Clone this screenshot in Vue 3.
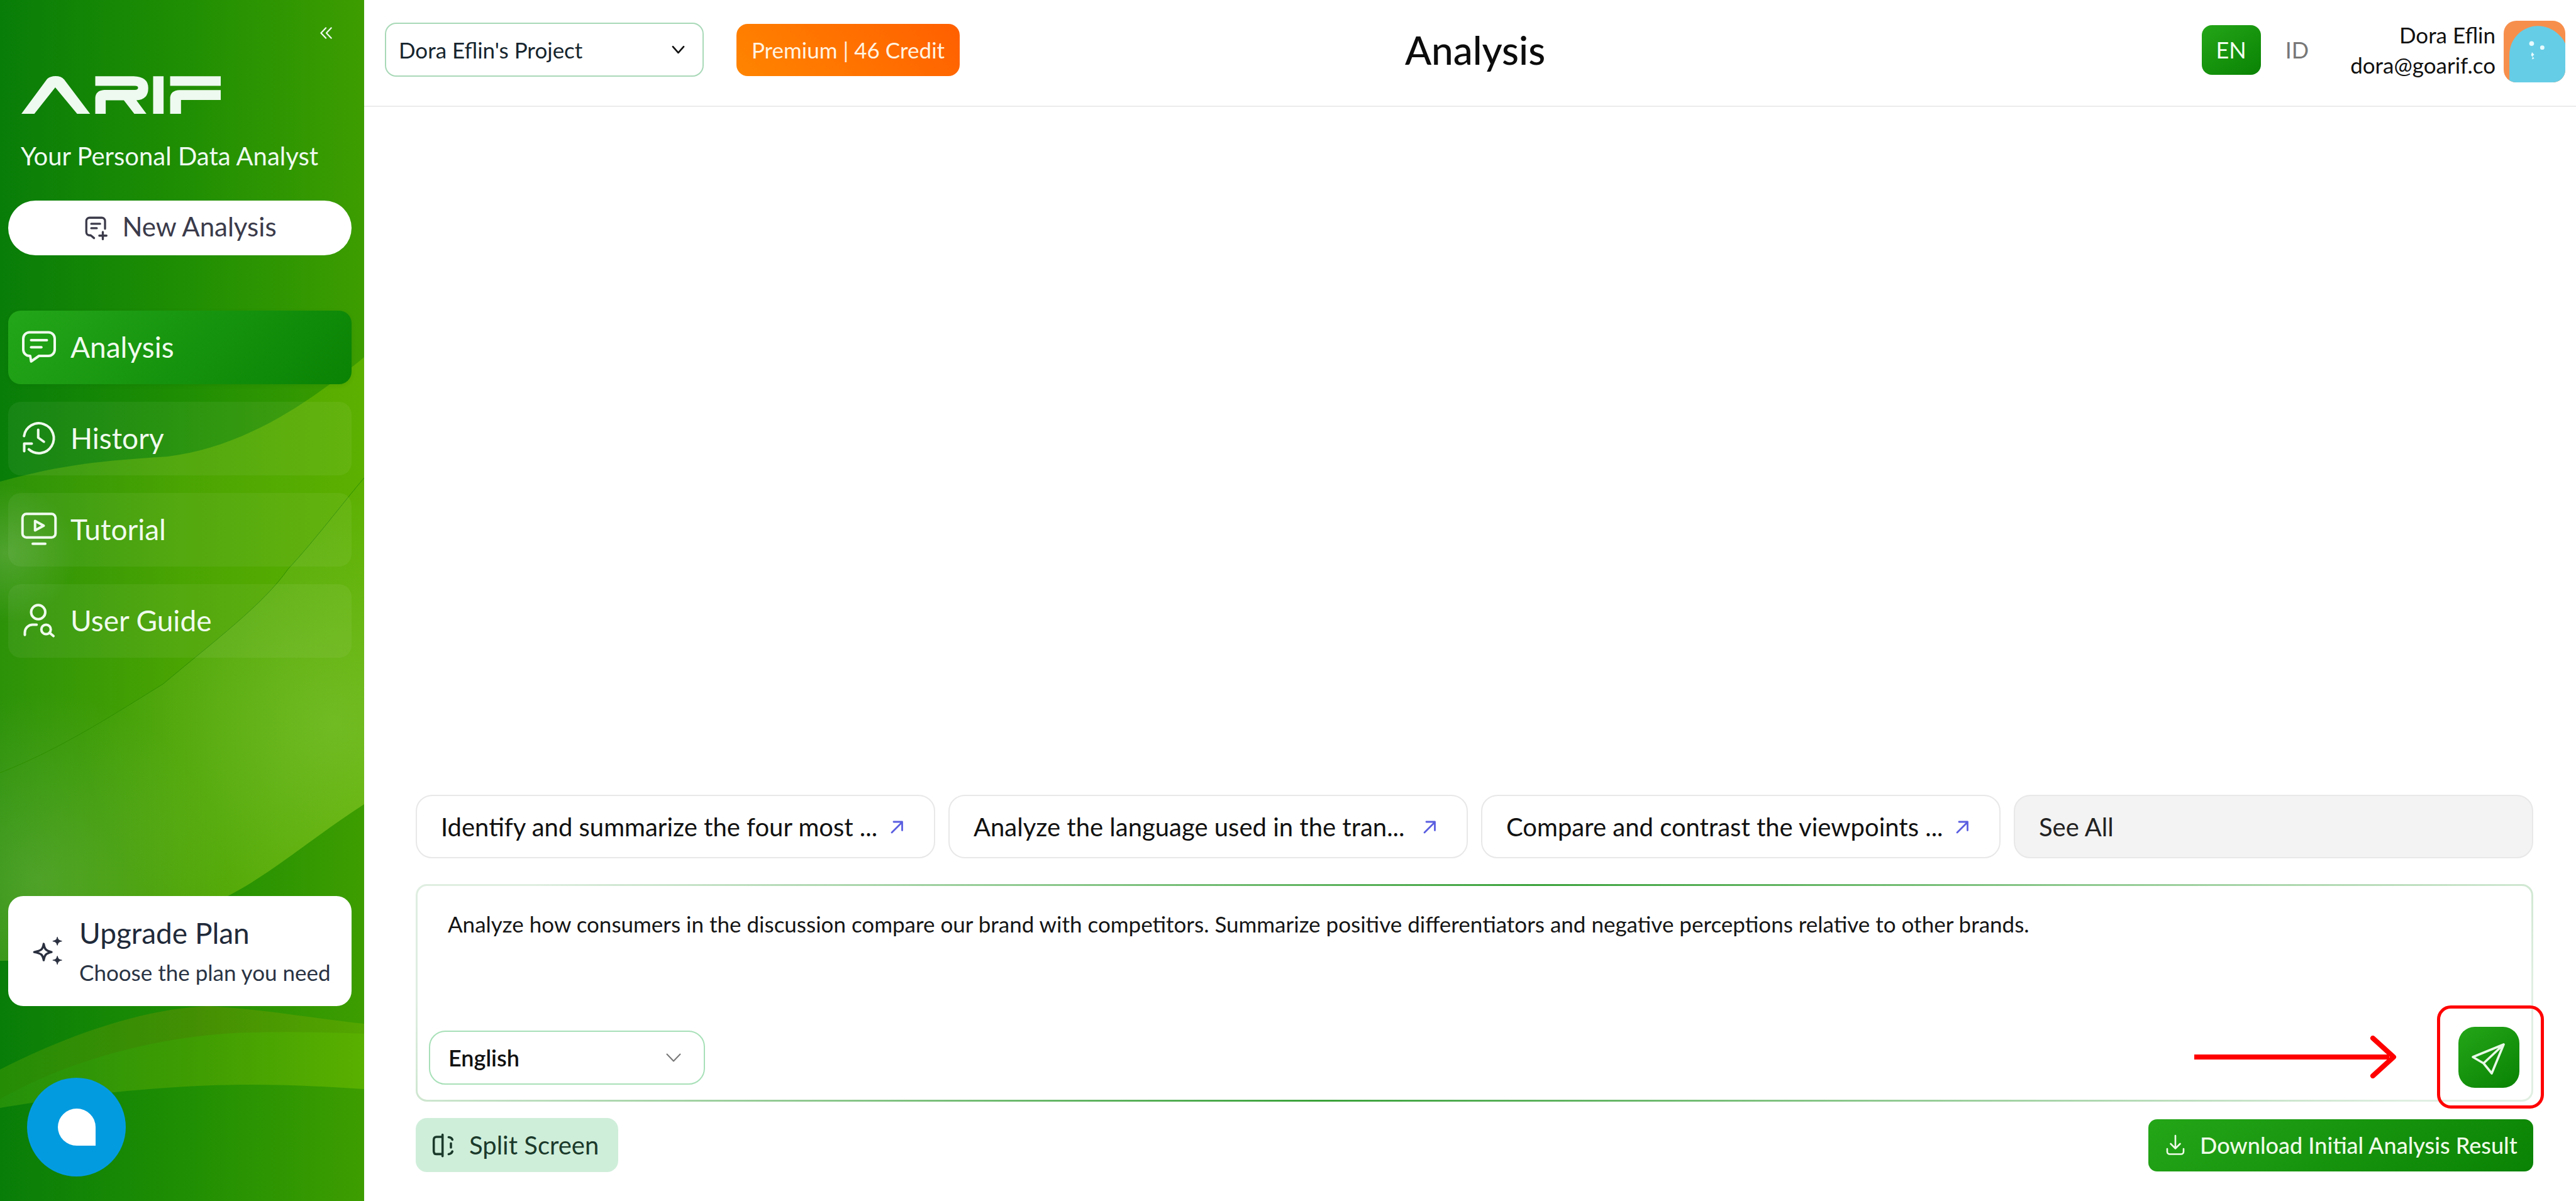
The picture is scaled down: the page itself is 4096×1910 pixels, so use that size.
<script setup>
const nav = [
  { label: 'Analysis', active: true, paths: ['M6 3h12a4 4 0 0 1 4 4v7a4 4 0 0 1-4 4h-6l-5 3.5-.6-3.5H6a4 4 0 0 1-4-4V7a4 4 0 0 1 4-4z', 'M7 8h10', 'M7 12.5h6.5'] },
  { label: 'History', paths: ['M2.5 11a9.5 9.5 0 1 1 3 8.4', 'M2.6 20.6v-4.8h4.8', 'M11.5 7v5l3.6 2.6'] },
  { label: 'Tutorial', paths: ['M4 2.5h16a2.5 2.5 0 0 1 2.5 2.5v10a2.5 2.5 0 0 1-2.5 2.5H4A2.5 2.5 0 0 1 1.5 15V5A2.5 2.5 0 0 1 4 2.5z', 'M9.5 7l5.5 3-5.5 3z', 'M8 21.5h8'] },
  { label: 'User Guide', paths: ['M7 7a4.5 4.5 0 1 0 9 0a4.5 4.5 0 1 0-9 0', 'M3 21.5V20a5 5 0 0 1 5-5h2.5', 'M13.5 18a3 3 0 1 0 6 0a3 3 0 1 0-6 0', 'M18.8 20.2l2.4 2'] }
]
const chips = [
  'Identify and summarize the four most ...',
  'Analyze the language used in the tran...',
  'Compare and contrast the viewpoints ...'
]
const prompt = 'Analyze how consumers in the discussion compare our brand with competitors. Summarize positive differentiators and negative perceptions relative to other brands.'
</script>

<template>
  <div class="app">
    <aside class="side">
      <svg class="waves" viewBox="0 0 579 1910" aria-hidden="true">
        <defs>
          <linearGradient id="base" gradientUnits="userSpaceOnUse" x1="0" y1="0" x2="579" y2="0">
            <stop offset="0" stop-color="#087d08" />
            <stop offset="0.5" stop-color="#1f8e03" />
            <stop offset="1" stop-color="#3d9d00" />
          </linearGradient>
          <linearGradient id="band" gradientUnits="userSpaceOnUse" x1="0" y1="0" x2="579" y2="0">
            <stop offset="0" stop-color="#2c9208" />
            <stop offset="0.5" stop-color="#4aa402" />
            <stop offset="1" stop-color="#5cb000" />
          </linearGradient>
          <linearGradient id="low" gradientUnits="userSpaceOnUse" x1="0" y1="0" x2="579" y2="0">
            <stop offset="0" stop-color="#258c06" />
            <stop offset="0.55" stop-color="#448f03" />
            <stop offset="1" stop-color="#54a600" />
          </linearGradient>
          <linearGradient id="low2" gradientUnits="userSpaceOnUse" x1="0" y1="0" x2="579" y2="0">
            <stop offset="0" stop-color="#24900a" />
            <stop offset="0.55" stop-color="#409d02" />
            <stop offset="1" stop-color="#5ab000" />
          </linearGradient>
          <radialGradient id="glow" gradientUnits="userSpaceOnUse" cx="530" cy="1150" r="400">
            <stop offset="0" stop-color="#9ad060" stop-opacity="0.36" />
            <stop offset="1" stop-color="#9ad060" stop-opacity="0" />
          </radialGradient>
          <radialGradient id="glow2" gradientUnits="userSpaceOnUse" cx="10" cy="880" r="110">
            <stop offset="0" stop-color="#d8e4c8" stop-opacity="0.2" />
            <stop offset="1" stop-color="#d8e4c8" stop-opacity="0" />
          </radialGradient>
          <radialGradient id="glow3" gradientUnits="userSpaceOnUse" cx="60" cy="1400" r="300">
            <stop offset="0" stop-color="#a8c890" stop-opacity="0.24" />
            <stop offset="1" stop-color="#a8c890" stop-opacity="0" />
          </radialGradient>
        </defs>
        <rect width="579" height="1910" fill="url(#base)" />
        <path d="M0 766C100 738 170 732 267 726C400 710 510 625 579 568V1279C500 1330 430 1390 366 1423C250 1480 100 1528 0 1528Z" fill="url(#band)" />
        <path d="M0 766C100 738 170 732 267 726C400 710 510 625 579 568V1279C500 1330 430 1390 366 1423C250 1480 100 1528 0 1528Z" fill="url(#glow3)" />
        <path d="M0 766C100 738 170 732 267 726C400 710 510 625 579 568V1279C500 1330 430 1390 366 1423C250 1480 100 1528 0 1528Z" fill="url(#glow2)" />
        <path d="M0 1229C100 1190 190 1130 259 1088C340 1020 420 960 458 905C500 860 545 800 579 760V1279C500 1330 430 1390 366 1423C320 1450 260 1475 200 1495Z" fill="url(#glow)" />
        <path d="M0 1229C100 1190 190 1130 259 1088C340 1020 420 960 458 905C500 860 545 800 579 760" fill="none" stroke="#2f8f00" stroke-width="1" />
        <path d="M0 1701C100 1650 220 1605 330 1600C420 1605 500 1620 579 1628V1910H0Z" fill="url(#low)" />
        <path d="M0 1748C100 1690 250 1645 400 1642C460 1640 520 1642 579 1644V1910H0Z" fill="url(#low2)" />
        <path d="M0 1762C100 1745 250 1725 400 1725C460 1725 520 1728 579 1732V1910H0Z" fill="url(#base)" />
      </svg>

      <button class="collapse" aria-label="Collapse">
        <svg viewBox="0 0 24 20" class="collapse-icon">
          <path d="M11 1.5L3 10l8 8.5M20 1.5L12 10l8 8.5" />
        </svg>
      </button>

      <svg class="logo" viewBox="55 70 1430 328" preserveAspectRatio="none" role="img" aria-label="ARIF logo">
        <path d="M55 398L240 95Q262 70 300 70Q340 70 362 100L548 398H455L298 168L148 398Z" />
        <path d="M585 72H860Q965 75 965 175Q965 275 880 280L952 398H865L790 280H660V398H585V265Q585 195 650 190H870Q892 188 892 172Q892 155 870 155H585Z" />
        <path d="M1000 72H1075V398H1000Z" />
        <path d="M1122 72H1485V155H1122Z" />
        <path d="M1122 398V265Q1122 195 1190 192H1485V278H1200V398Z" />
      </svg>

      <p class="tagline">Your Personal Data Analyst</p>

      <button class="new">
        <svg viewBox="0 0 24 24" class="new-icon">
          <path d="M20 13V6a3 3 0 0 0-3-3H6a3 3 0 0 0-3 3v10a3 3 0 0 0 3 3h1l3 2.5" />
          <path d="M7.5 8.5h8M7.5 12.5h5M18 16v6.5M14.8 19.3h6.5" />
        </svg>
        <span>New Analysis</span>
      </button>

      <nav class="nav">
        <a v-for="item in nav" :key="item.label" class="nav-item" :class="{ active: item.active }">
          <svg viewBox="0 0 24 24" class="nav-icon">
            <path v-for="d in item.paths" :key="d" :d="d" />
          </svg>
          <span>{{ item.label }}</span>
        </a>
      </nav>

      <div class="upgrade">
        <svg viewBox="0 0 48 46" class="spark">
          <path class="spark-line" d="M18 12C19.500 20 21 22 29.500 24C21 26 19.500 28 18 36C16.500 28 15 26 4 24C15 22 16.500 20 18 12Z" />
          <path class="spark-fill" d="M38 2C38.800 6 40 7 44.500 8C40 9 38.800 10 38 14C37.200 10 36 9 31.500 8C36 7 37.200 6 38 2Z" />
          <path class="spark-fill" d="M38 30C38.800 34 40 35 44.500 36C40 37 38.800 38 38 42C37.200 38 36 37 31.500 36C36 35 37.200 34 38 30Z" />
        </svg>
        <div class="upgrade-text">
          <strong>Upgrade Plan</strong>
          <small>Choose the plan you need</small>
        </div>
      </div>
    </aside>

    <main class="main">
      <header class="top">
        <div class="top-left">
          <div class="project">
            <span>Dora Eflin's Project</span>
            <svg viewBox="0 0 22 14" class="project-chev"><path d="M2 2l9 10 9-10" /></svg>
          </div>
          <div class="credit">Premium | 46 Credit</div>
        </div>
        <h1 class="title">Analysis</h1>
        <div class="top-right">
          <span class="lang on">EN</span>
          <span class="lang">ID</span>
          <div class="who">
            <span>Dora Eflin</span>
            <span>dora@goarif.co</span>
          </div>
          <svg class="avatar" viewBox="0 0 540 540" role="img" aria-label="Avatar">
            <rect width="540" height="540" fill="#f78f4c" />
            <path d="M50 540V300C50 150 170 45 300 45C400 45 500 110 540 200V540Z" fill="#66cde6" />
            <circle cx="245" cy="200" r="21" fill="#e8fbff" />
            <circle cx="338" cy="235" r="19" fill="#e8fbff" />
            <path d="M248 275l20 22-16 14 16 20-22 8 8-20-14-18z" fill="#e8fbff" />
          </svg>
        </div>
      </header>

      <section class="body">
        <div class="chips">
          <button v-for="c in chips" :key="c" class="chip">
            <span>{{ c }}</span>
            <svg viewBox="0 0 22 22" class="chip-arrow"><path d="M3 20L19 4M6 3h13.500v13.500" /></svg>
          </button>
          <button class="chip all">See All</button>
        </div>

        <div class="box">
          <p class="prompt">{{ prompt }}</p>
          <div class="box-row">
            <div class="lang-select">
              <span>English</span>
              <svg viewBox="0 0 24 14" class="lang-chev"><path d="M1.500 1.500L12 12.500 22.500 1.500" /></svg>
            </div>
            <button class="send" aria-label="Send">
              <svg viewBox="0 0 97 97"><path d="M72 28L23 48L40 58L53 74ZM72 28L40 58" /></svg>
            </button>
          </div>
        </div>

        <div class="foot">
          <button class="split">
            <svg viewBox="225 215 195 215" class="split-icon">
              <path d="M318 247H265Q240 247 240 275V372Q240 400 265 400H318M318 228V418M372 250Q398 252 405 272M392 305V342M405 376Q398 396 372 400" />
            </svg>
            <span>Split Screen</span>
          </button>
          <button class="download">
            <svg viewBox="0 0 30 34" class="dl-icon">
              <path d="M15 2V22M7.500 15L15 22.500 22.500 15M2 23V27.500A4 4 0 0 0 6 31.500H24A4 4 0 0 0 28 27.500V23" />
            </svg>
            <span>Download Initial Analysis Result</span>
          </button>
        </div>
      </section>
    </main>

    <div class="bubble"><i></i></div>

    <div class="mark-box"></div>
    <svg class="mark-arrow" viewBox="0 0 330 68">
      <path class="shaft" d="M0 34H310" />
      <path class="head" d="M284 4L317 34 284 64" />
    </svg>
  </div>
</template>

<style scoped>
.app {
  position: relative;
  display: flex;
  width: 4096px;
  height: 1910px;
  overflow: hidden;
  background: #fff;
  color: #111;
  font-family: Lato, "Noto Sans", sans-serif;
}
button {
  font-family: inherit;
  border: 0;
  padding: 0;
  cursor: pointer;
}
svg:where(:not(.waves, .avatar)) path {
  fill: none;
  stroke: currentColor;
  stroke-linecap: round;
  stroke-linejoin: round;
}

/* Sidebar */
.side {
  position: relative;
  flex: 0 0 579px;
  display: flex;
  flex-direction: column;
  box-sizing: border-box;
  height: 1910px;
  padding: 43px 20px 310px 13px;
  background: #1f8e03;
}
.waves {
  position: absolute;
  inset: 0;
  width: 579px;
  height: 1910px;
}
.side > *:not(.waves) {
  position: relative;
}
.collapse {
  align-self: flex-end;
  width: 24px;
  height: 19px;
  margin-right: 28px;
  background: none;
  color: #eef9f0;
}
.collapse-icon {
  display: block;
  width: 24px;
  height: 19px;
  stroke-width: 2.4;
}
.logo {
  width: 317px;
  height: 60px;
  margin: 59px 0 0 21px;
  flex: none;
}
.logo path {
  fill: #eef9f0;
  stroke: none;
}
.tagline {
  margin: 43px 0 47px 20px;
  font-size: 40px;
  line-height: 48px;
  color: #eefaf0;
  white-space: nowrap;
}
.new {
  display: flex;
  align-items: center;
  justify-content: center;
  gap: 20px;
  box-sizing: border-box;
  height: 87px;
  padding-bottom: 6px;
  flex: none;
  border-radius: 44px;
  background: #fff;
  color: #3b3b4b;
  font-size: 42px;
}
.new-icon {
  width: 42px;
  height: 42px;
  stroke-width: 1.9;
  margin-top: 4px;
}
.nav {
  display: flex;
  flex-direction: column;
  gap: 28px;
  margin-top: 88px;
}
.nav-item {
  display: flex;
  align-items: center;
  gap: 20px;
  box-sizing: border-box;
  height: 117px;
  padding: 0 0 3px 19px;
  border-radius: 20px;
  background: rgba(255, 255, 255, 0.055);
  color: #f0fbee;
  font-size: 46px;
}
.nav-item.active {
  background: linear-gradient(135deg, #23a619, #0a8204);
  box-shadow: 0 2px 6px rgba(0, 80, 0, 0.12);
}
.nav-icon {
  width: 60px;
  height: 60px;
  stroke-width: 1.6;
  flex: none;
}
.upgrade {
  display: flex;
  align-items: center;
  gap: 24px;
  margin-top: auto;
  height: 175px;
  padding-left: 37px;
  border-radius: 24px;
  background: #fff;
  color: #1f2a3a;
  flex: none;
}
.spark {
  width: 52px;
  height: 50px;
  flex: none;
}
.spark-line {
  stroke: #2b3040;
  stroke-width: 3.2;
}
.spark-fill {
  fill: #2b3040;
  stroke: #2b3040;
  stroke-width: 1;
}
.upgrade-text {
  display: flex;
  flex-direction: column;
  gap: 16px;
}
.upgrade-text strong {
  font-size: 46px;
  line-height: 50px;
  font-weight: 400;
  white-space: nowrap;
}
.upgrade-text small {
  font-size: 35px;
  line-height: 42px;
  color: #2a3444;
  white-space: nowrap;
}
.bubble {
  position: absolute;
  left: 43px;
  top: 1714px;
  display: flex;
  align-items: center;
  justify-content: center;
  width: 157px;
  height: 157px;
  border-radius: 50%;
  background: #039be0;
}
.bubble i {
  display: block;
  width: 60px;
  height: 59px;
  border-radius: 50% 50% 0 50%;
  background: #fff;
}

/* Main */
.main {
  flex: 1;
  display: flex;
  flex-direction: column;
  min-width: 0;
}
.top {
  display: grid;
  grid-template-columns: 1fr auto 1fr;
  align-items: center;
  box-sizing: border-box;
  height: 170px;
  padding: 0 17px 10px 33px;
  border-bottom: 2px solid #ebebeb;
  flex: none;
}
.top-left {
  display: flex;
  align-items: center;
  gap: 52px;
}
.project {
  display: flex;
  align-items: center;
  justify-content: space-between;
  box-sizing: border-box;
  width: 507px;
  height: 86px;
  padding: 0 28px 0 20px;
  border: 2px solid #a9d9b8;
  border-radius: 18px;
  font-size: 35px;
  color: #16252e;
}
.project-chev {
  width: 21px;
  height: 14px;
  stroke-width: 2.8;
  color: #111;
}
.credit {
  display: flex;
  align-items: center;
  justify-content: center;
  width: 355px;
  height: 83px;
  border-radius: 18px;
  background: linear-gradient(45deg, #ff8500, #ff5f00);
  color: #fff3e2;
  font-size: 35px;
  white-space: nowrap;
}
.title {
  margin: 0;
  font-size: 62px;
  font-weight: 500;
  line-height: 72px;
  color: #0c0c0c;
}
.top-right {
  display: flex;
  align-items: center;
  justify-content: flex-end;
}
.lang {
  display: flex;
  align-items: center;
  justify-content: center;
  font-size: 36px;
  color: #777;
  margin-left: 39px;
}
.lang.on {
  width: 94px;
  height: 79px;
  margin: 0;
  border-radius: 16px;
  background: linear-gradient(145deg, #24a618, #0a8204);
  color: #f2fff0;
}
.who {
  display: flex;
  flex-direction: column;
  align-items: flex-end;
  margin: 0 13px 0 66px;
  font-size: 35px;
  line-height: 48px;
  color: #111;
}
.avatar {
  width: 98px;
  height: 98px;
  margin-top: 5px;
  border-radius: 20px;
  flex: none;
}

.body {
  flex: 1;
  display: flex;
  flex-direction: column;
  justify-content: flex-end;
  padding: 0 68px 46px 82px;
}
.chips {
  display: grid;
  grid-template-columns: repeat(4, 1fr);
  gap: 21px;
  margin-bottom: 41px;
}
.chip {
  display: flex;
  align-items: center;
  justify-content: space-between;
  box-sizing: border-box;
  height: 101px;
  padding: 0 48px 0 38px;
  border: 2px solid #e8e8e8;
  border-radius: 26px;
  background: #fff;
  color: #111;
  font-size: 40px;
  white-space: nowrap;
}
.chip.all {
  background: #f3f3f3;
  color: #222;
}
.chip-arrow {
  width: 22px;
  height: 22px;
  stroke-width: 2.8;
  color: #5a5ee0;
  flex: none;
}
.box {
  display: flex;
  flex-direction: column;
  box-sizing: border-box;
  height: 346px;
  padding: 36px 19px 19px 18px;
  border: 3px solid transparent;
  border-radius: 18px;
  background: linear-gradient(#fff, #fff) padding-box,
    linear-gradient(135deg, #dfeee1 5%, #3aa23a 48%, #e0efe2 95%) border-box;
}
.prompt {
  margin: 0 0 0 30px;
  font-size: 35px;
  line-height: 48px;
  color: #151515;
  white-space: nowrap;
}
.box-row {
  display: flex;
  align-items: center;
  justify-content: space-between;
  margin-top: auto;
}
.lang-select {
  display: flex;
  align-items: center;
  justify-content: space-between;
  box-sizing: border-box;
  width: 439px;
  height: 86px;
  padding: 0 36px 0 29px;
  border: 2px solid #a8e0b8;
  border-radius: 26px;
  font-size: 36px;
  font-weight: 600;
}
.lang-chev {
  width: 24px;
  height: 14px;
  stroke-width: 2;
  color: #777;
}
.send {
  display: flex;
  width: 97px;
  height: 97px;
  border-radius: 26px;
  background: linear-gradient(145deg, #24a618, #0a8204);
  color: #e9f9e8;
}
.send svg {
  width: 97px;
  height: 97px;
  stroke-width: 3.600;
}
.foot {
  display: flex;
  align-items: center;
  justify-content: space-between;
  margin-top: 26px;
}
.split {
  display: flex;
  align-items: center;
  gap: 24px;
  box-sizing: border-box;
  width: 322px;
  height: 86px;
  padding-left: 26px;
  border-radius: 18px;
  background: #cfeeda;
  color: #1b3a2b;
  font-size: 40px;
  white-space: nowrap;
}
.split-icon {
  width: 35px;
  height: 39px;
  stroke-width: 20;
  flex: none;
}
.download {
  display: flex;
  align-items: center;
  gap: 24px;
  box-sizing: border-box;
  width: 612px;
  height: 83px;
  padding-left: 28px;
  border-radius: 14px;
  background: linear-gradient(145deg, #24a618, #0a8204);
  color: #effbe8;
  font-size: 36px;
  font-weight: 500;
  white-space: nowrap;
}
.dl-icon {
  width: 30px;
  height: 34px;
  stroke-width: 2.6;
  flex: none;
}

/* Red annotation */
.mark-box {
  position: absolute;
  left: 3875px;
  top: 1599px;
  width: 170px;
  height: 164px;
  box-sizing: border-box;
  border: 5px solid #ff0000;
  border-radius: 22px;
}
.mark-arrow {
  position: absolute;
  left: 3489px;
  top: 1647px;
  width: 330px;
  height: 68px;
  color: #ff0000;
}
.mark-arrow .shaft {
  stroke-width: 8;
  stroke-linecap: butt;
}
.mark-arrow .head {
  stroke-width: 8;
}
</style>
